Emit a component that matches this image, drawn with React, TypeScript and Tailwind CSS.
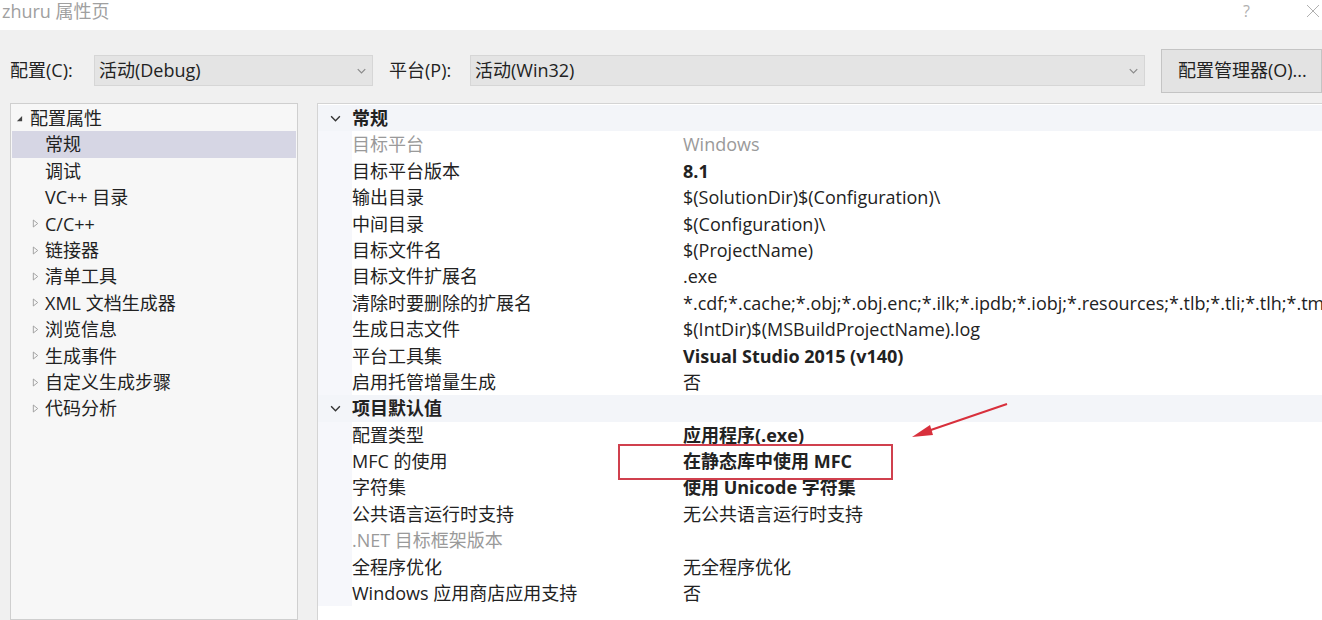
import React from "react";

const FONT = '"Open Sans", "Noto Sans CJK SC", sans-serif';

function Chevron({ className }: { className?: string }) {
  return (
    <svg viewBox="0 0 12 8" className={className} fill="none" stroke="currentColor" strokeWidth="1.6">
      <path d="M1 1.5 L6 6.5 L11 1.5" />
    </svg>
  );
}

function TriOpen() {
  return (
    <svg viewBox="0 0 8 8" className="w-[7px] h-[7px] text-[#444]">
      <path d="M7 1 L7 7 L1 7 Z" fill="currentColor" />
    </svg>
  );
}

function TriClosed() {
  return (
    <svg viewBox="0 0 8 10" className="w-[7px] h-[9px] text-[#999]">
      <path d="M1.5 1 L6.5 5 L1.5 9 Z" fill="none" stroke="currentColor" strokeWidth="1" />
    </svg>
  );
}

type Row =
  | { kind: "header"; label: string }
  | { kind: "prop"; label: string; value: string; bold?: boolean; dim?: boolean; dimValue?: boolean };

const rows: Row[] = [
  { kind: "header", label: "常规" },
  { kind: "prop", label: "目标平台", value: "Windows", dim: true, dimValue: true },
  { kind: "prop", label: "目标平台版本", value: "8.1", bold: true },
  { kind: "prop", label: "输出目录", value: "$(SolutionDir)$(Configuration)\\" },
  { kind: "prop", label: "中间目录", value: "$(Configuration)\\" },
  { kind: "prop", label: "目标文件名", value: "$(ProjectName)" },
  { kind: "prop", label: "目标文件扩展名", value: ".exe" },
  {
    kind: "prop",
    label: "清除时要删除的扩展名",
    value: "*.cdf;*.cache;*.obj;*.obj.enc;*.ilk;*.ipdb;*.iobj;*.resources;*.tlb;*.tli;*.tlh;*.tmp;*.rsp;*.pgc;*.pgd;*.meta",
  },
  { kind: "prop", label: "生成日志文件", value: "$(IntDir)$(MSBuildProjectName).log" },
  { kind: "prop", label: "平台工具集", value: "Visual Studio 2015 (v140)", bold: true },
  { kind: "prop", label: "启用托管增量生成", value: "否" },
  { kind: "header", label: "项目默认值" },
  { kind: "prop", label: "配置类型", value: "应用程序(.exe)", bold: true },
  { kind: "prop", label: "MFC 的使用", value: "在静态库中使用 MFC", bold: true },
  { kind: "prop", label: "字符集", value: "使用 Unicode 字符集", bold: true },
  { kind: "prop", label: "公共语言运行时支持", value: "无公共语言运行时支持" },
  { kind: "prop", label: ".NET 目标框架版本", value: "", dim: true },
  { kind: "prop", label: "全程序优化", value: "无全程序优化" },
  { kind: "prop", label: "Windows 应用商店应用支持", value: "否" },
];

const tree: { label: string; level: 0 | 1; icon?: "open" | "closed"; selected?: boolean }[] = [
  { label: "配置属性", level: 0, icon: "open" },
  { label: "常规", level: 1, selected: true },
  { label: "调试", level: 1 },
  { label: "VC++ 目录", level: 1 },
  { label: "C/C++", level: 1, icon: "closed" },
  { label: "链接器", level: 1, icon: "closed" },
  { label: "清单工具", level: 1, icon: "closed" },
  { label: "XML 文档生成器", level: 1, icon: "closed" },
  { label: "浏览信息", level: 1, icon: "closed" },
  { label: "生成事件", level: 1, icon: "closed" },
  { label: "自定义生成步骤", level: 1, icon: "closed" },
  { label: "代码分析", level: 1, icon: "closed" },
];

export default function App() {
  return (
    <div
      className="relative w-[1322px] h-[620px] overflow-hidden bg-[#f0f0f0] text-[#222] text-[18px] leading-[26.4px]"
      style={{ fontFamily: FONT }}
    >
      {/* title bar */}
      <div className="h-[30px] bg-white flex items-start justify-between">
        <div className="pl-[2px] text-[#a0a0a0] text-[18px] leading-[22px]">zhuru 属性页</div>
        <div className="flex items-center h-[22px]">
          <span className="text-[#b0b0b0] text-[16px] leading-[20px] mr-[56px]">?</span>
          <svg viewBox="0 0 14 14" className="w-[14px] h-[14px] text-[#b0b0b0] mr-[2px]" fill="none" stroke="currentColor" strokeWidth="1">
            <path d="M1 1 L13 13 M13 1 L1 13" />
          </svg>
        </div>
      </div>

      {/* toolbar */}
      <div className="h-[73px] pt-[8px] flex items-center">
        <span className="ml-[10px] w-[84px] shrink-0">配置(C):</span>
        <div className="w-[279px] shrink-0 h-[31px] bg-[#e4e4e4] border border-[#d6d6d6] flex items-center justify-between pl-[4px] pr-[6px]">
          <span>活动(Debug)</span>
          <Chevron className="w-[9px] h-[6px] text-[#8a8a8a]" />
        </div>
        <span className="ml-[16px] w-[81px] shrink-0">平台(P):</span>
        <div className="w-[675px] shrink-0 h-[31px] bg-[#e4e4e4] border border-[#d6d6d6] flex items-center justify-between pl-[4px] pr-[6px]">
          <span>活动(Win32)</span>
          <Chevron className="w-[9px] h-[6px] text-[#8a8a8a]" />
        </div>
        <div className="ml-[16px] flex-1 h-[44px] bg-[#e3e3e3] border border-[#c4c4c4] flex items-center pl-[16px] whitespace-nowrap overflow-hidden">
          配置管理器(O)...
        </div>
      </div>

      {/* main */}
      <div className="flex h-[517px]">
        {/* tree */}
        <div className="ml-[10px] w-[288px] shrink-0 border border-[#cfcfcf] bg-[#f7f7f7] pt-[1px] px-[1px]">
          {tree.map((t, i) => (
            <div
              key={i}
              className={`h-[26.4px] flex items-center ${t.selected ? "bg-[#d6d6e4]" : ""}`}
            >
              <div className={`${t.level === 0 ? "w-[18px] pl-[4px]" : "w-[33px] pl-[20px]"} shrink-0 flex items-center`}>
                {t.icon === "open" && <TriOpen />}
                {t.icon === "closed" && <TriClosed />}
              </div>
              <span className="whitespace-nowrap">{t.label}</span>
            </div>
          ))}
        </div>

        {/* property grid */}
        <div className="ml-[19px] flex-1 min-w-0 border-l border-t border-[#d4d4d4] bg-white pt-[1px] overflow-hidden">
          {rows.map((r, i) =>
            r.kind === "header" ? (
              <div key={i} className="h-[26.4px] flex items-center bg-[#f3f5f9]">
                <div className="w-[34px] shrink-0 flex justify-center">
                  <Chevron className="w-[11px] h-[7px] text-[#333]" />
                </div>
                <span className="font-bold">{r.label}</span>
              </div>
            ) : (
              <div key={i} className="h-[26.4px] flex items-center">
                <div className="w-[34px] shrink-0 h-full bg-[#f6f7fb]" />
                <div className={`w-[331px] shrink-0 whitespace-nowrap ${r.dim ? "text-[#9a9a9a]" : ""}`}>{r.label}</div>
                <div
                  className={`whitespace-nowrap ${r.bold ? "font-bold" : ""} ${r.dimValue ? "text-[#9a9a9a]" : ""}`}
                >
                  {r.value}
                </div>
              </div>
            )
          )}
        </div>
      </div>

      {/* red highlight box */}
      <div className="absolute left-[618px] top-[444px] w-[275px] h-[36px] border-2 border-[#d0404e]" />

      {/* red arrow */}
      <svg className="absolute left-[900px] top-[395px] w-[120px] h-[55px]" viewBox="0 0 120 55">
        <line x1="107" y1="9" x2="22" y2="38" stroke="#d8303c" strokeWidth="2" />
        <path d="M12 42 L30 30 L33 40 Z" fill="#d8303c" />
      </svg>
    </div>
  );
}
